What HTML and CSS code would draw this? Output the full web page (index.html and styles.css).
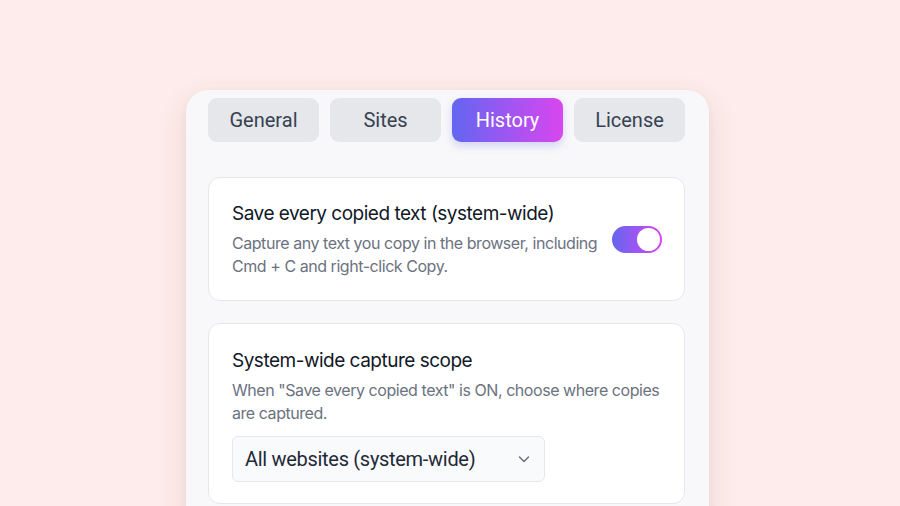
FILE: index.html
```html
<!DOCTYPE html>
<html>
<head>
<meta charset="utf-8">
<link rel="stylesheet" href="styles.css">
</head>
<body>
<div class="stage">
  <div class="panel">
    <nav class="tabs">
      <button class="tab">General</button>
      <button class="tab">Sites</button>
      <button class="tab active">History</button>
      <button class="tab">License</button>
    </nav>
    <section class="card card-toggle">
      <div class="text">
        <h3 class="title">Save every copied text (system-wide)</h3>
        <p class="desc">Capture any text you copy in the browser, including Cmd + C and right-click Copy.</p>
      </div>
      <div class="switch"><span class="knob"></span></div>
    </section>
    <section class="card card-scope">
      <h3 class="title">System-wide capture scope</h3>
      <p class="desc">When "Save every copied text" is ON, choose where copies are captured.</p>
      <div class="select">
        <span>All websites (system-wide)</span>
        <svg class="chev" width="14" height="14" viewBox="0 0 14 14"><path d="M2.5 5l4.5 4.5L11.5 5" fill="none" stroke="#6b7280" stroke-width="1.5" stroke-linecap="round" stroke-linejoin="round"/></svg>
      </div>
    </section>
  </div>
</div>
</body>
</html>
```

FILE: styles.css
```css
* { box-sizing: border-box; }
html, body { margin: 0; padding: 0; }
body {
  width: 900px;
  height: 506px;
  overflow: hidden;
  background: #fdeceb;
  font-family: Inter, "Noto Sans", sans-serif;
}
.stage {
  height: 506px;
  overflow: hidden;
  display: flex;
  justify-content: flex-start;
  padding: 90px 0 0 186px;
}
.panel {
  width: 523px;
  height: 440px;
  flex: none;
  background: #f8f8fa;
  border-radius: 22px;
  padding: 8px 24px 0 22px;
  box-shadow: 0 10px 30px rgba(120, 60, 60, 0.12), 0 2px 6px rgba(120, 60, 60, 0.06);
}
.tabs {
  display: flex;
  gap: 11px;
  margin-bottom: 35px;
}
.tab {
  width: 111px;
  height: 44px;
  border: 0;
  border-radius: 9px;
  background: #e5e7eb;
  color: #374151;
  font-family: Roboto, "Liberation Sans", sans-serif;
  font-size: 20px;
  padding: 0;
}
.tab.active {
  background: linear-gradient(90deg, #6366f1, #d946ef);
  color: #ffffff;
  box-shadow: 0 4px 8px rgba(99, 102, 241, 0.25);
}
.card {
  background: #ffffff;
  border: 1px solid #e5e7eb;
  border-radius: 12px;
}
.card-toggle {
  height: 124px;
  padding: 0 22px 0 23px;
  display: flex;
  align-items: center;
  gap: 6px;
  margin-bottom: 22px;
}
.text { flex: 1; }
.title {
  margin: 0;
  font-size: 19px;
  font-weight: 400;
  line-height: 26px;
  letter-spacing: -0.5px;
  color: #111827;
}
.desc {
  margin: 5px 0 0;
  font-size: 16px;
  line-height: 23px;
  letter-spacing: -0.45px;
  color: #6b7280;
}
.switch {
  flex: none;
  width: 50px;
  height: 27px;
  border-radius: 14px;
  background: linear-gradient(90deg, #6366f1, #d946ef);
  display: flex;
  align-items: center;
  justify-content: flex-end;
  padding: 0 2px;
}
.knob {
  width: 23px;
  height: 23px;
  border-radius: 50%;
  background: #ffffff;
}
.card-scope {
  padding: 24px 17px 21px 23px;
}
.select {
  margin-top: 11px;
  width: 313px;
  height: 46px;
  border: 1px solid #e5e7eb;
  border-radius: 6px;
  background: #f9fafb;
  display: flex;
  align-items: center;
  justify-content: space-between;
  padding: 0 13px 0 12px;
  font-family: Roboto, "Liberation Sans", sans-serif;
  font-size: 20px;
  letter-spacing: -0.3px;
  color: #1f2937;
}
.chev { flex: none; }
```
